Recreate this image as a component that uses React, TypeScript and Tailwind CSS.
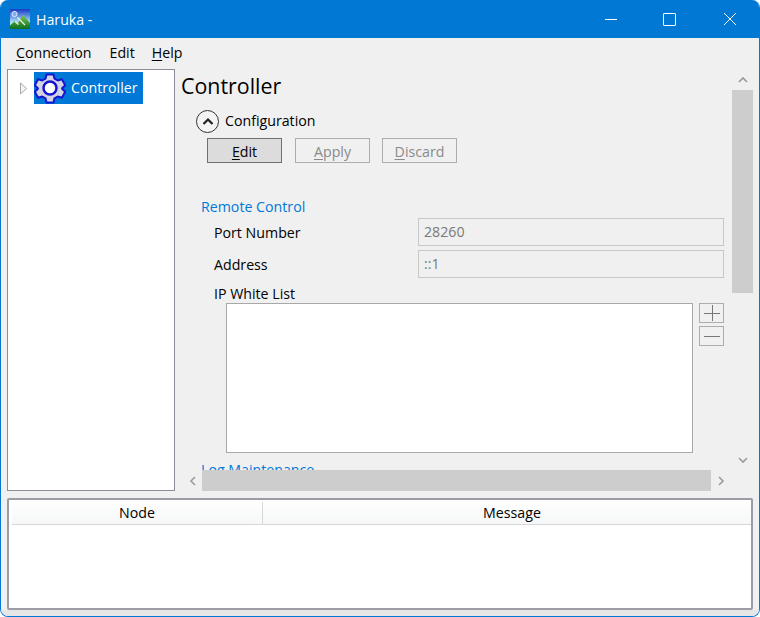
import React from 'react';

function Mnemonic({ first, rest }: { first: string; rest: string }) {
  return (
    <span>
      <span className="underline underline-offset-2 decoration-1">{first}</span>
      {rest}
    </span>
  );
}

function AppLogo() {
  return (
    <svg width="20" height="20" viewBox="0 0 20 20" className="shrink-0">
      <defs>
        <linearGradient id="sky" x1="0" y1="0" x2="0" y2="1">
          <stop offset="0" stopColor="#1638c8" />
          <stop offset="0.65" stopColor="#a8e0f4" />
        </linearGradient>
        <linearGradient id="hill" x1="0" y1="0" x2="0" y2="1">
          <stop offset="0" stopColor="#7cc850" />
          <stop offset="1" stopColor="#0c6f20" />
        </linearGradient>
      </defs>
      <rect width="20" height="20" fill="url(#sky)" />
      <circle cx="4.5" cy="5" r="2.6" fill="#7fa8f0" stroke="#e2ecff" strokeWidth="1" />
      <path d="M0 20V16.5L5 12 8 14 13 6 20 14V20Z" fill="url(#hill)" />
      <path d="M7.5 8.5L15 16M5 12.5L8.5 15.5" stroke="#f0f8e0" strokeWidth="1.2" fill="none" />
    </svg>
  );
}

function GearIcon() {
  return (
    <svg width="32" height="32" viewBox="0 0 32 32" className="shrink-0">
      <path
        d="M12.5 2.5h7l1 4.2 3.2 1.8 4.2-1.2 3.3 6-3.1 3 0 .4 3.1 3-3.3 6-4.2-1.2-3.2 1.8-1 4.2h-7l-1-4.2-3.2-1.8-4.2 1.2-3.3-6 3.1-3 0-.4-3.1-3 3.3-6 4.2 1.2 3.2-1.8z"
        fill="#d4d4e4"
        stroke="#1414d2"
        strokeWidth="2"
        strokeLinejoin="round"
      />
      <circle cx="16" cy="16" r="6.5" fill="#ffffff" stroke="#1414d2" strokeWidth="2.5" />
    </svg>
  );
}

function ActionButton({ first, rest, active }: { first: string; rest: string; active?: boolean }) {
  return (
    <div
      className={
        active
          ? 'w-[75px] h-[25px] pt-[3px] flex items-center justify-center border border-[#707070] bg-[#dcdcdc] text-black'
          : 'w-[75px] h-[25px] pt-[3px] flex items-center justify-center border border-[#adadad] bg-[#f0f0f0] text-[#8a8a8a]'
      }
    >
      <Mnemonic first={first} rest={rest} />
    </div>
  );
}

function FieldRow({ label, value }: { label: string; value: string }) {
  return (
    <div className="flex items-center h-[28px]">
      <span className="w-[204px] pt-[2px] text-black">{label}</span>
      <div className="w-[306px] h-[28px] flex items-center px-[5px] border border-[#c8c8c8] bg-[#f0f0f0] text-[#7a7a7a]">
        {value}
      </div>
    </div>
  );
}

function SquareButton({ children }: { children: React.ReactNode }) {
  return (
    <div className="w-[25px] h-[20px] flex items-center justify-center border border-[#adadad] bg-[#f0f0f0]">
      {children}
    </div>
  );
}

function Chevron({ d }: { d: string }) {
  return (
    <svg width="12" height="12" viewBox="0 0 12 12" fill="none" stroke="#9a9a9a" strokeWidth="1.6">
      <path d={d} />
    </svg>
  );
}

export default function App() {
  return (
    <div
      className="w-[760px] h-[617px] bg-white overflow-hidden text-[14.2px] leading-none"
      style={{ fontFamily: '"Open Sans", "Noto Sans", sans-serif' }}
    >
      <div className="w-full h-full flex flex-col rounded-lg overflow-hidden border-x border-b border-[#0078d4] bg-[#f0f0f0]">
        {/* title bar */}
        <div className="h-[38px] shrink-0 flex items-center bg-[#0078d4] text-white pl-[9px]">
          <AppLogo />
          <span className="ml-[6px] pt-[2px] text-[14.2px]">Haruka -</span>
          <div className="ml-auto flex items-center">
            <div className="w-[12px] h-px bg-white mr-[46px]" />
            <div className="w-[13px] h-[13px] rounded-[1px] border border-white mr-[47px]" />
            <svg width="14" height="14" viewBox="0 0 14 14" className="mr-[22px]" stroke="#fff" strokeWidth="1">
              <path d="M1 1L13 13M13 1L1 13" />
            </svg>
          </div>
        </div>

        {/* menu */}
        <div className="h-[31px] shrink-0 flex items-center pl-[15px] pb-[1px] text-black">
          <Mnemonic first="C" rest="onnection" />
          <span className="ml-[18px]">Edit</span>
          <span className="ml-[17px]">
            <Mnemonic first="H" rest="elp" />
          </span>
        </div>

        {/* main split */}
        <div className="flex h-[423px] shrink-0 pl-[6px]">
          <div className="w-[168px] h-[422px] shrink-0 border border-[#8c8c9c] bg-white relative">
            <div className="flex items-center pt-[2px] pl-[11px]">
              <svg width="9" height="13" viewBox="0 0 9 13" className="mr-[6px]">
                <path d="M1.5 1V12L7.5 6.5Z" fill="#f4f4f4" stroke="#a8a8a8" />
              </svg>
              <div className="w-[109px] h-[32px] flex items-center bg-[#0078d7] text-white">
                <GearIcon />
                <span className="ml-[5px]">Controller</span>
              </div>
            </div>
          </div>

          <div className="flex-1 flex min-w-0">
            <div className="w-[555px] shrink-0 flex flex-col">
              <div className="h-[401px] overflow-hidden pl-[6px] text-black">
                <div className="text-[21.4px] h-[34px] pt-[6px] leading-[22px]">Controller</div>
                <div className="flex items-center h-[24px] pl-[15px] mt-[6px]">
                  <div className="w-[23px] h-[23px] rounded-full border-[1.5px] border-[#333] bg-[#f4f4f4] flex items-center justify-center">
                    <svg width="12" height="9" viewBox="0 0 12 9" fill="none" stroke="#222" strokeWidth="2.2">
                      <path d="M1.5 7L6 2.5 10.5 7" />
                    </svg>
                  </div>
                  <span className="ml-[6px]">Configuration</span>
                </div>
                <div className="flex pl-[26px] mt-[5px]">
                  <ActionButton first="E" rest="dit" active />
                  <div className="ml-[13px]">
                    <ActionButton first="A" rest="pply" />
                  </div>
                  <div className="ml-[12px]">
                    <ActionButton first="D" rest="iscard" />
                  </div>
                </div>
                <div className="pl-[20px] mt-[37px] h-[16px] text-[#0078d7]">Remote Control</div>
                <div className="pl-[33px] mt-[2px] flex flex-col gap-[4px]">
                  <FieldRow label="Port Number" value="28260" />
                  <FieldRow label="Address" value="::1" />
                </div>
                <div className="pl-[33px] mt-[9px] h-[16px]">IP White List</div>
                <div className="flex pl-[45px]">
                  <div className="w-[467px] h-[150px] border border-[#a8a8a8] bg-white" />
                  <div className="ml-[6px] flex flex-col gap-[3px]">
                    <SquareButton>
                      <svg width="16" height="16" viewBox="0 0 16 16" stroke="#77777a" strokeWidth="1">
                        <path d="M0 8.5H16M8.5 0V16" />
                      </svg>
                    </SquareButton>
                    <SquareButton>
                      <div className="w-[16px] h-px bg-[#77777a]" />
                    </SquareButton>
                  </div>
                </div>
                <div className="pl-[20px] mt-[10px] text-[#0078d7]">Log Maintenance</div>
              </div>
              <div className="h-[21px] flex items-center">
                <div className="w-[27px] flex justify-end pr-[3px]">
                  <Chevron d="M8 2L4 6 8 10" />
                </div>
                <div className="w-[509px] h-[21px] bg-[#cdcdcd]" />
                <div className="ml-[4px]">
                  <Chevron d="M4 2L8 6 4 10" />
                </div>
              </div>
            </div>
            <div className="w-[23px] h-[401px] flex flex-col items-center pl-[2px]">
              <div className="h-[21px] flex items-center justify-center">
                <Chevron d="M2 8L6 4 10 8" />
              </div>
              <div className="w-[21px] h-[203px] bg-[#cdcdcd]" />
              <div className="mt-auto h-[21px] flex items-center justify-center">
                <Chevron d="M2 4L6 8 10 4" />
              </div>
            </div>
          </div>
        </div>

        {/* message table */}
        <div className="mt-[6px] ml-[6px] w-[746px] h-[112px] shrink-0 border-2 border-[#9c9ca6] rounded-[2px] bg-white pl-[3px]">
          <div className="flex h-[25px] border-b border-[#d8d8d8] bg-gradient-to-b from-white to-[#f6f7f8] text-black pt-[2px]">
            <div className="w-[251px] flex items-center justify-center border-r border-[#d8d8d8]">Node</div>
            <div className="flex-1 flex items-center justify-center pl-[10px]">Message</div>
          </div>
        </div>
        <div className="flex-1 bg-[#e6e6e6]" />
      </div>
    </div>
  );
}
